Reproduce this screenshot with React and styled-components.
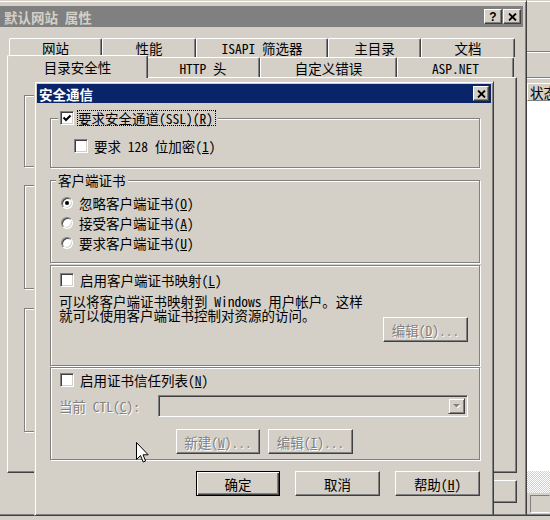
import React from "react";
import styled, { createGlobalStyle, css } from "styled-components";

const FONT = `"Noto Sans Mono CJK SC", "Noto Sans CJK SC", "Liberation Mono", monospace`;
const FACE = "#d4d0c8";
const SHADOW = "#808080";
const DARK = "#404040";
const LIGHT = "#ffffff";

const GlobalStyle = createGlobalStyle`
  html, body { margin: 0; padding: 0; background: ${FACE}; }
  body { font-family: ${FONT}; font-size: 13.5px; line-height: 14px; color: #000; }
  *, *::before, *::after { box-sizing: border-box; }
  u { text-decoration: underline; text-underline-offset: 1px; }
`;

const Desktop = styled.div`
  position: relative;
  width: 550px;
  height: 520px;
  overflow: hidden;
  background: ${FACE};
  display: flex;
  flex-direction: column;
`;

const MainRow = styled.div`
  display: flex;
  height: 516px;
`;

/* ---------- outer property sheet window ---------- */
const PropWindow = styled.div`
  flex: 0 0 527px;
  height: 516px;
  padding: 5px 3px 0 0;
  border-top: 1px solid ${FACE};
  border-right: 1px solid ${DARK};
  border-bottom: 1px solid ${DARK};
  box-shadow: inset 0 1px 0 ${LIGHT}, inset -1px -1px 0 ${SHADOW};
  display: flex;
  flex-direction: column;
`;

const TitleBar = styled.div`
  height: ${(p) => p.$h}px;
  flex: 0 0 auto;
  background: ${(p) => (p.$active ? "#0a246a" : SHADOW)};
  display: flex;
  align-items: center;
  padding: 0 2px 0 ${(p) => p.$pl}px;
`;

const TitleText = styled.span`
  font-weight: bold;
  color: ${(p) => (p.$active ? LIGHT : FACE)};
  white-space: pre;
`;

const CaptionButtons = styled.div`
  margin-left: auto;
  display: flex;
  gap: 1px;
`;

const CaptionButton = styled.div`
  width: ${(p) => p.$w}px;
  height: 15px;
  background: ${FACE};
  border: 1px solid;
  border-color: ${LIGHT} ${DARK} ${DARK} ${LIGHT};
  box-shadow: inset -1px -1px 0 ${SHADOW};
  display: flex;
  align-items: center;
  justify-content: center;
`;

const QGlyph = styled.span`
  font-family: "Liberation Sans", sans-serif;
  font-weight: bold;
  font-size: 12px;
  line-height: 12px;
`;

const SheetBody = styled.div`
  padding: 11px 0 0 7px;
  display: flex;
  flex-direction: column;
`;

const TabRow = styled.div`
  display: flex;
  align-items: flex-start;
  height: ${(p) => p.$h}px;
  padding-left: 2px;
`;

const Tab = styled.div`
  position: relative;
  flex: 0 0 auto;
  width: ${(p) => p.$w}px;
  height: ${(p) => p.$h}px;
  background: ${FACE};
  border-top: 1px solid ${LIGHT};
  border-left: 1px solid ${LIGHT};
  border-right: 1px solid ${DARK};
  border-radius: 2px 2px 0 0;
  box-shadow: inset -1px 0 0 ${SHADOW};
  display: flex;
  align-items: center;
  justify-content: center;
  white-space: pre;
  z-index: 1;
  ${(p) =>
    p.$selected &&
    css`
      margin: -2px -2px -1px -2px;
      z-index: 3;
    `}
`;

const TabPanel = styled.div`
  position: relative;
  z-index: 2;
  width: 510px;
  height: 396px;
  border: 1px solid;
  border-color: ${LIGHT} ${DARK} ${DARK} ${LIGHT};
  box-shadow: inset -1px -1px 0 ${SHADOW};
  padding: 17px 0 0 16px;
  display: flex;
  flex-direction: column;
`;

const BackGroup = styled.div`
  width: 440px;
  height: ${(p) => p.$h}px;
  margin-top: ${(p) => p.$mt}px;
  border: 1px solid ${SHADOW};
  box-shadow: inset 1px 1px 0 ${LIGHT}, 1px 1px 0 ${LIGHT};
`;

const SheetButtons = styled.div`
  width: 510px;
  margin-top: 7px;
  display: flex;
  justify-content: flex-end;
  gap: 6px;
`;

/* ---------- right background app ---------- */
const SidePane = styled.div`
  flex: 1 1 0;
  min-width: 0;
  overflow: hidden;
  display: flex;
  flex-direction: column;
  border-top: 1px solid ${FACE};
  border-bottom: 1px solid ${DARK};
  box-shadow: inset 0 1px 0 ${LIGHT}, inset 0 -1px 0 ${SHADOW};
`;

const SideTop = styled.div`
  height: 82px;
  display: flex;
  flex-direction: column;
`;

const SideRule = styled.div`
  margin-top: ${(p) => p.$mt}px;
  height: 2px;
  border-top: 1px solid ${SHADOW};
  border-bottom: 1px solid ${LIGHT};
`;

const ColumnHeader = styled.div`
  height: 18px;
  border-top: 1px solid ${LIGHT};
  border-left: 1px solid ${LIGHT};
  border-bottom: 1px solid ${SHADOW};
  padding-left: 2px;
  display: flex;
  align-items: center;
  white-space: nowrap;
  overflow: hidden;
`;

const ListArea = styled.div`
  flex: 1;
  background: ${LIGHT};
`;

const Checker = styled.div`
  height: 22px;
  background-color: ${LIGHT};
  background-image: conic-gradient(${FACE} 25%, ${LIGHT} 0 50%, ${FACE} 0 75%, ${LIGHT} 0);
  background-size: 2px 2px;
`;

const StatusBar = styled.div`
  height: 22px;
  padding: 2px 0 2px 3px;
  display: flex;
`;

const StatusPanel = styled.div`
  flex: 1;
  border: 1px solid;
  border-color: ${SHADOW} transparent ${LIGHT} ${SHADOW};
`;

/* ---------- modal dialog ---------- */
const Dialog = styled.div`
  position: absolute;
  left: 34px;
  top: 81px;
  width: 460px;
  height: 435px;
  z-index: 5;
  background: ${FACE};
  border: 1px solid;
  border-color: ${FACE} ${DARK} ${DARK} ${FACE};
  box-shadow: inset 1px 1px 0 ${LIGHT}, inset -1px -1px 0 ${SHADOW};
  padding: 2px;
  display: flex;
  flex-direction: column;
`;

const DialogBody = styled.div`
  padding: 0 11px 0 13px;
  display: flex;
  flex-direction: column;
`;

const Group = styled.div`
  position: relative;
  height: ${(p) => p.$h}px;
  margin-top: ${(p) => p.$mt}px;
  border: 1px solid ${SHADOW};
  box-shadow: inset 1px 1px 0 ${LIGHT}, 1px 1px 0 ${LIGHT};
  padding: ${(p) => p.$pad};
  display: flex;
  flex-direction: column;
  align-items: flex-start;
`;

const Legend = styled.div`
  position: absolute;
  top: -9px;
  left: ${(p) => p.$left}px;
  height: 16px;
  padding: 0 2px;
  background: ${FACE};
  display: flex;
  align-items: center;
  white-space: pre;
`;

const CheckRow = styled.div`
  display: flex;
  align-items: center;
  height: ${(p) => p.$h || 16}px;
  white-space: pre;
`;

const CheckBox = styled.span`
  flex: 0 0 auto;
  width: 14px;
  height: 14px;
  background: ${LIGHT};
  border: 1px solid;
  border-color: ${SHADOW} ${LIGHT} ${LIGHT} ${SHADOW};
  box-shadow: inset 1px 1px 0 ${DARK}, inset -1px -1px 0 ${FACE};
  display: flex;
  align-items: center;
  justify-content: center;
`;

const Label = styled.span`
  margin-left: ${(p) => p.$ml}px;
  white-space: pre;
  ${(p) =>
    p.$focus &&
    css`
      border: 1px dotted #000;
      height: 16px;
      line-height: 14px;
      padding-right: 2px;
    `}
`;

const RadioRow = styled.div`
  display: flex;
  align-items: center;
  height: 20px;
  white-space: pre;
`;

const Radio = styled.span`
  position: relative;
  flex: 0 0 auto;
  width: 12px;
  height: 12px;
  border-radius: 50%;
  background: ${LIGHT};
  border: 1px solid;
  border-color: ${SHADOW} ${LIGHT} ${LIGHT} ${SHADOW};
  box-shadow: inset 1px 1px 0 ${DARK}, inset -1px -1px 0 ${FACE};
  display: flex;
  align-items: center;
  justify-content: center;
  &::after {
    content: "";
    width: 4px;
    height: 4px;
    border-radius: 50%;
    background: ${(p) => (p.$checked ? "#000" : "transparent")};
  }
`;

const DescRow = styled.div`
  align-self: stretch;
  display: flex;
  align-items: flex-start;
  margin-top: 6px;
`;

const DescText = styled.div`
  flex: 1;
  margin-left: -1px;
  white-space: pre;
  line-height: 14px;
`;

const FieldRow = styled.div`
  display: flex;
  align-items: center;
  margin-top: ${(p) => p.$mt}px;
`;

const FieldLabel = styled.span`
  width: 99px;
  margin-left: -1px;
  white-space: pre;
  color: ${SHADOW};
  text-shadow: 1px 1px 0 ${LIGHT};
`;

const Combo = styled.div`
  width: 310px;
  height: 22px;
  border: 1px solid;
  border-color: ${SHADOW} ${LIGHT} ${LIGHT} ${SHADOW};
  box-shadow: inset 1px 1px 0 ${DARK}, inset -1px -1px 0 ${FACE};
  background: ${FACE};
  padding: 2px;
  display: flex;
  justify-content: flex-end;
`;

const DropButton = styled.div`
  width: 17px;
  height: 16px;
  border: 1px solid;
  border-color: ${FACE} ${DARK} ${DARK} ${FACE};
  box-shadow: inset 1px 1px 0 ${LIGHT}, inset -1px -1px 0 ${SHADOW};
  display: flex;
  align-items: center;
  justify-content: center;
`;

const ButtonRow = styled.div`
  display: flex;
  gap: ${(p) => p.$gap}px;
  margin-top: ${(p) => p.$mt}px;
  margin-left: ${(p) => p.$ml || 0}px;
  justify-content: ${(p) => p.$justify || "flex-start"};
  align-self: stretch;
`;

const Button = styled.button`
  flex: 0 0 auto;
  width: ${(p) => p.$w}px;
  height: ${(p) => p.$h || 25}px;
  margin: ${(p) => p.$m || "0"};
  padding: 0;
  font: inherit;
  background: ${FACE};
  border: 1px solid;
  border-color: ${LIGHT} ${DARK} ${DARK} ${LIGHT};
  box-shadow: inset -1px -1px 0 ${SHADOW};
  color: ${(p) => (p.disabled ? SHADOW : "#000")};
  text-shadow: ${(p) => (p.disabled ? `1px 1px 0 ${LIGHT}` : "none")};
  display: flex;
  align-items: center;
  justify-content: center;
  white-space: pre;
  ${(p) =>
    p.$default &&
    css`
      border-color: #000;
      box-shadow: inset 1px 1px 0 ${LIGHT}, inset -1px -1px 0 ${DARK}, inset -2px -2px 0 ${SHADOW};
    `}
`;

const Cursor = styled.svg`
  position: absolute;
  left: 136px;
  top: 442px;
  z-index: 10;
`;

const CloseGlyph = () => (
  <svg width="9" height="8" viewBox="0 0 9 8">
    <path d="M1 0.5 L8 7.5 M8 0.5 L1 7.5" stroke="#000" strokeWidth="1.8" fill="none" />
  </svg>
);

const CheckGlyph = () => (
  <svg width="10" height="10" viewBox="0 0 10 10">
    <path d="M1.5 4.5 L4 7 L8.5 2.5" stroke="#000" strokeWidth="2" fill="none" />
  </svg>
);

const DropArrow = () => (
  <svg width="9" height="6" viewBox="0 0 9 6">
    <path d="M2 2 H9 L5.5 5.5 Z" fill={LIGHT} />
    <path d="M1 1 H8 L4.5 4.5 Z" fill={SHADOW} />
  </svg>
);

const backTabs = [
  { t: "网站", w: 93 },
  { t: "性能", w: 94 },
  { t: "ISAPI 筛选器", w: 132 },
  { t: "主目录", w: 93 },
  { t: "文档", w: 94 },
];

const frontTabs = [
  { t: "目录安全性", w: 141, sel: true },
  { t: "HTTP 头", w: 114 },
  { t: "自定义错误", w: 137 },
  { t: "ASP.NET", w: 117 },
];

export default function App() {
  return (
    <>
      <GlobalStyle />
      <Desktop>
        <MainRow>
          <PropWindow>
            <TitleBar $h={21} $pl={4}>
              <TitleText>默认网站 属性</TitleText>
              <CaptionButtons>
                <CaptionButton $w={18}>
                  <QGlyph>?</QGlyph>
                </CaptionButton>
                <CaptionButton $w={18}>
                  <CloseGlyph />
                </CaptionButton>
              </CaptionButtons>
            </TitleBar>
            <SheetBody>
              <TabRow $h={19}>
                {backTabs.map((tab) => (
                  <Tab key={tab.t} $w={tab.w} $h={19}>
                    {tab.t}
                  </Tab>
                ))}
              </TabRow>
              <TabRow $h={20}>
                {frontTabs.map((tab) => (
                  <Tab key={tab.t} $w={tab.w} $h={tab.sel ? 23 : 20} $selected={tab.sel}>
                    {tab.t}
                  </Tab>
                ))}
              </TabRow>
              <TabPanel>
                <BackGroup $mt={0} $h={72} />
                <BackGroup $mt={18} $h={104} />
                <BackGroup $mt={19} $h={124} />
              </TabPanel>
              <SheetButtons>
                <Button $w={75} $h={23} aria-label="确定" />
                <Button $w={75} $h={23} aria-label="取消" />
                <Button $w={75} $h={23} aria-label="应用" />
                <Button $w={75} $h={23} aria-label="帮助" />
              </SheetButtons>
            </SheetBody>
          </PropWindow>
          <SidePane>
            <SideTop>
              <SideRule $mt={50} />
              <SideRule $mt={24} />
            </SideTop>
            <ColumnHeader>状态</ColumnHeader>
            <ListArea />
            <Checker />
            <StatusBar>
              <StatusPanel />
            </StatusBar>
          </SidePane>
        </MainRow>

        <Dialog>
          <TitleBar $h={19} $pl={2} $active>
            <TitleText $active>安全通信</TitleText>
            <CaptionButtons>
              <CaptionButton $w={16}>
                <CloseGlyph />
              </CaptionButton>
            </CaptionButtons>
          </TitleBar>
          <DialogBody>
            <Group $mt={15} $h={50} $pad="20px 0 0 23px">
              <Legend $left={7}>
                <CheckBox>
                  <CheckGlyph />
                </CheckBox>
                <Label $ml={3} $focus>
                  要求安全通道(SSL)(<u>R</u>)
                </Label>
              </Legend>
              <CheckRow $h={14}>
                <CheckBox />
                <Label $ml={6}>
                  要求 128 位加密(<u>1</u>)
                </Label>
              </CheckRow>
            </Group>

            <Group $mt={12} $h={83} $pad="12px 0 0 10px">
              <Legend $left={5}>客户端证书</Legend>
              <RadioRow>
                <Radio $checked />
                <Label $ml={6}>
                  忽略客户端证书(<u>O</u>)
                </Label>
              </RadioRow>
              <RadioRow>
                <Radio />
                <Label $ml={6}>
                  接受客户端证书(<u>A</u>)
                </Label>
              </RadioRow>
              <RadioRow>
                <Radio />
                <Label $ml={6}>
                  要求客户端证书(<u>U</u>)
                </Label>
              </RadioRow>
            </Group>

            <Group $mt={2} $h={101} $pad="6px 0 0 9px">
              <CheckRow>
                <CheckBox />
                <Label $ml={6}>
                  启用客户端证书映射(<u>L</u>)
                </Label>
              </CheckRow>
              <DescRow>
                <DescText>
                  {"可以将客户端证书映射到 Windows 用户帐户。这样\n就可以使用客户端证书控制对资源的访问。"}
                </DescText>
                <Button $w={85} $h={25} $m="23px 11px 0 0" disabled>
                  编辑(<u>D</u>)...
                </Button>
              </DescRow>
            </Group>

            <Group $mt={1} $h={93} $pad="4px 0 0 9px">
              <CheckRow>
                <CheckBox />
                <Label $ml={6}>
                  启用证书信任列表(<u>N</u>)
                </Label>
              </CheckRow>
              <FieldRow $mt={7}>
                <FieldLabel>
                  当前 CTL(<u>C</u>):
                </FieldLabel>
                <Combo>
                  <DropButton>
                    <DropArrow />
                  </DropButton>
                </Combo>
              </FieldRow>
              <ButtonRow $mt={12} $ml={116} $gap={8}>
                <Button $w={84} disabled>
                  新建(<u>W</u>)...
                </Button>
                <Button $w={85} disabled>
                  编辑(<u>I</u>)...
                </Button>
              </ButtonRow>
            </Group>

            <ButtonRow $mt={11} $gap={15} $justify="flex-end">
              <Button $w={84} $default>
                确定
              </Button>
              <Button $w={85}>取消</Button>
              <Button $w={85}>
                帮助(<u>H</u>)
              </Button>
            </ButtonRow>
          </DialogBody>
        </Dialog>

        <Cursor width="13" height="21" viewBox="0 0 13 21">
          <path
            d="M0.5 0.5 V17.5 L4.5 13.5 L7.2 20 L9.6 19 L7 12.8 H12.2 Z"
            fill="#fff"
            stroke="#000"
            strokeWidth="1"
            strokeLinejoin="miter"
          />
        </Cursor>
      </Desktop>
    </>
  );
}
